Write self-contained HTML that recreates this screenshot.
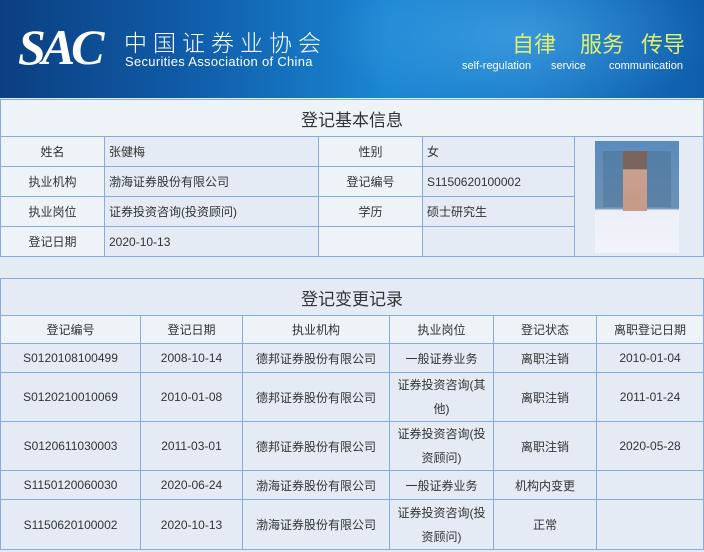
<!DOCTYPE html>
<html><head><meta charset="utf-8"><style>
*{margin:0;padding:0;box-sizing:border-box}
body{width:704px;height:552px;background:#e5ebf3;font-family:"Liberation Sans","Noto Sans CJK SC",sans-serif;color:#333;font-size:12px;position:relative;overflow:hidden}
.hdr{position:absolute;left:0;top:0;width:704px;height:98px;background:linear-gradient(90deg,#0b3f80 0%,#0f5aa6 25%,#1a86d4 55%,#1778c8 75%,#0f5eab 100%);overflow:hidden}
.hdr .glow{position:absolute;left:330px;top:-20px;width:380px;height:140px;background:radial-gradient(ellipse at 50% 40%,rgba(120,210,255,.35),rgba(0,0,0,0) 70%)}
.sac{position:absolute;left:18px;top:22px;font-family:"Liberation Serif",serif;font-style:italic;font-weight:bold;color:#fff;font-size:50px;letter-spacing:-4px;line-height:50px}
.cn{position:absolute;left:124px;top:28px;color:#fff;font-size:23px;letter-spacing:6px;line-height:26px;font-family:"Noto Sans CJK SC",sans-serif;font-weight:300}
.en{position:absolute;left:125px;top:54px;color:#fff;font-size:13px;letter-spacing:.3px}
.slog{position:absolute;top:31px;font-size:22px;color:#e0ee70;line-height:24px;font-family:"Noto Sans CJK SC",sans-serif}
.slg{position:absolute;top:60px;font-size:11px;color:#fff}
table{position:absolute;left:0;border-collapse:collapse;table-layout:fixed}
td{border:1px solid #86acdc;text-align:center;font-size:12px}
.t1{top:99px;width:703px}
.t2{top:278px;width:703px}
.ttl{background:#eef3f8;font-size:17px;color:#333}
.l{background:#eef3f8}
.v{background:#e4ebf4;text-align:left;padding-left:4px}
.t2 td{background:#e4ebf4}
.t2 tr.h td{background:#eef3f8}
.photo{position:absolute;left:595px;top:141px;width:84px;height:112px;background:linear-gradient(180deg,#5b8cbc 0%,#6a92b8 60%,#edeff7 62%,#f3f4fa 100%)}
.face{position:absolute;left:28px;top:10px;width:24px;height:60px;background:linear-gradient(180deg,#7a6460 0%,#7a6460 30%,#c9a08f 31%,#c59a86 100%)}
.sh{position:absolute;left:8px;top:10px;width:68px;height:56px;background:rgba(70,100,130,.35)}
</style></head><body>
<div class="hdr"><div class="glow"></div>
<div class="sac">SAC</div>
<div class="cn">中国证券业协会</div>
<div class="en">Securities Association of China</div>
<div class="slog" style="left:512px">自律</div>
<div class="slog" style="left:580px">服务</div>
<div class="slog" style="left:641px">传导</div>
<div class="slg" style="left:462px">self-regulation</div>
<div class="slg" style="left:551px">service</div>
<div class="slg" style="left:609px">communication</div>
</div>
<table class="t1">
<colgroup><col style="width:104px"><col style="width:214px"><col style="width:104px"><col style="width:152px"><col style="width:129px"></colgroup>
<tr style="height:37px"><td colspan="5" class="ttl">登记基本信息</td></tr>
<tr style="height:30px"><td class="l">姓名</td><td class="v">张健梅</td><td class="l">性别</td><td class="v">女</td><td rowspan="4" class="v" style="background:#e4ebf4"></td></tr>
<tr style="height:30px"><td class="l">执业机构</td><td class="v">渤海证券股份有限公司</td><td class="l">登记编号</td><td class="v">S1150620100002</td></tr>
<tr style="height:30px"><td class="l">执业岗位</td><td class="v">证券投资咨询(投资顾问)</td><td class="l">学历</td><td class="v">硕士研究生</td></tr>
<tr style="height:30px"><td class="l">登记日期</td><td class="v">2020-10-13</td><td class="l"></td><td class="v"></td></tr>
</table>
<div class="photo"><div class="sh"></div><div class="face"></div></div>
<table class="t2">
<colgroup><col style="width:140px"><col style="width:102px"><col style="width:147px"><col style="width:104px"><col style="width:103px"><col style="width:107px"></colgroup>
<tr style="height:37px"><td colspan="6" class="ttl">登记变更记录</td></tr>
<tr class="h" style="height:28px"><td>登记编号</td><td>登记日期</td><td>执业机构</td><td>执业岗位</td><td>登记状态</td><td>离职登记日期</td></tr>
<tr style="height:29px"><td>S0120108100499</td><td>2008-10-14</td><td>德邦证券股份有限公司</td><td>一般证券业务</td><td>离职注销</td><td>2010-01-04</td></tr>
<tr style="height:49px"><td>S0120210010069</td><td>2010-01-08</td><td>德邦证券股份有限公司</td><td style="line-height:24px;padding:0 6px">证券投资咨询(其他)</td><td>离职注销</td><td>2011-01-24</td></tr>
<tr style="height:48px"><td>S0120611030003</td><td>2011-03-01</td><td>德邦证券股份有限公司</td><td style="line-height:24px;padding:0 6px">证券投资咨询(投资顾问)</td><td>离职注销</td><td>2020-05-28</td></tr>
<tr style="height:29px"><td>S1150120060030</td><td>2020-06-24</td><td>渤海证券股份有限公司</td><td>一般证券业务</td><td>机构内变更</td><td></td></tr>
<tr style="height:50px"><td>S1150620100002</td><td>2020-10-13</td><td>渤海证券股份有限公司</td><td style="line-height:24px;padding:0 6px">证券投资咨询(投资顾问)</td><td>正常</td><td></td></tr>
</table>
</body></html>
